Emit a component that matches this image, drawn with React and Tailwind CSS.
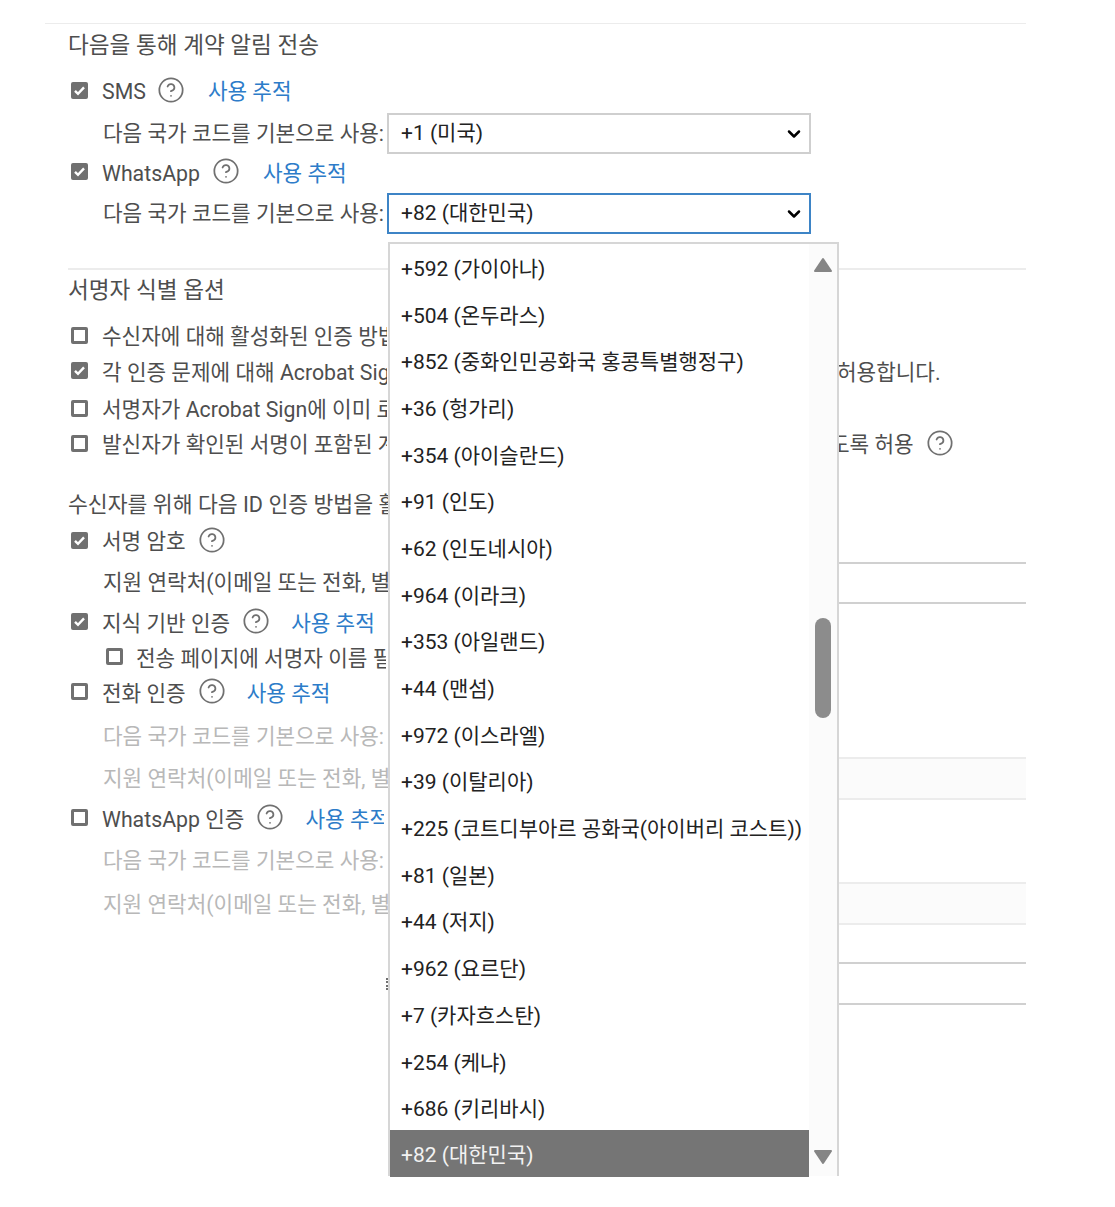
import { ChevronDown, CircleHelp } from "lucide-react"

const codes = [
  "+592 (가이아나)", "+504 (온두라스)", "+852 (중화인민공화국 홍콩특별행정구)", "+36 (헝가리)", "+354 (아이슬란드)",
  "+91 (인도)", "+62 (인도네시아)", "+964 (이라크)", "+353 (아일랜드)", "+44 (맨섬)", "+972 (이스라엘)", "+39 (이탈리아)",
  "+225 (코트디부아르 공화국(아이버리 코스트))", "+81 (일본)", "+44 (저지)", "+962 (요르단)", "+7 (카자흐스탄)",
  "+254 (케냐)", "+686 (키리바시)",
]

function Check({ on }) {
  if (!on) return <span className="block size-[17px] shrink-0 rounded-[2px] border-[3px] border-[#707070] mb-[4px]" />
  return (
    <span className="flex size-[17px] shrink-0 items-center justify-center rounded-[2px] bg-[#707070] mb-[4px]">
      <svg width="13" height="13" viewBox="0 0 13 13" fill="none">
        <path d="M2 6.8l3 3 6-6.4" stroke="#fff" strokeWidth="2.4" />
      </svg>
    </span>
  )
}

function Help({ className = "" }) {
  return <CircleHelp size={28} strokeWidth={1.5} className={`shrink-0 text-[#707070] mb-[5px] ${className}`} />
}

function Track({ className = "" }) {
  return <span className={`whitespace-nowrap text-[#2d7cc9] ${className}`}>사용 추적</span>
}

function Select({ value, focused }) {
  return (
    <div className={`flex h-[41px] w-[424px] shrink-0 items-center justify-between bg-white pl-[12px] pr-[5px] text-[21px] text-[#222] ${focused ? "border-2 border-[#3d84c6]" : "border-2 border-[#cfcfcf]"}`}>
      <span>{value}</span>
      <ChevronDown size={20} strokeWidth={3} className="text-black" />
    </div>
  )
}

// row with a label that runs under the open list
function Clip({ children, width, className = "" }) {
  return <span className={`block overflow-hidden whitespace-nowrap py-[3px] ${className}`} style={{ width }}>{children}</span>
}

function InputRow({ label, h, disabled, tone = "border-[#d0d0d0]", fill = "", labelClass = "" }) {
  return (
    <div className={`flex items-center pl-[35px] ${h}`}>
      <Clip width={285} className={`${disabled ? "text-[#b8b8b8]" : ""} ${labelClass}`}>{label}</Clip>
      <div className={`h-full flex-1 border-y-2 ${tone} ${fill}`} />
    </div>
  )
}

function CountryLabel() {
  return <span className="w-[284px] shrink-0 whitespace-nowrap">다음 국가 코드를 기본으로 사용:</span>
}

function Arrow({ down }) {
  return (
    <svg width="20" height="16" viewBox="0 0 20 16" className="shrink-0">
      <path d={down ? "M2 2h16l-8 12z" : "M10 2l8 12H2z"} fill="#858585" stroke="#858585" strokeWidth="2" strokeLinejoin="round" />
    </svg>
  )
}

export default function App() {
  return (
    <div className="relative h-[1207px] w-[1115px] overflow-hidden bg-white font-['Roboto','Noto_Sans_CJK_KR',sans-serif] text-[21.3px] leading-none text-[#4e4e4e]">
      <div className="ml-[45px] mt-[23px] w-[981px] border-t border-[#ececec] pl-[23px]">
        <div className="flex h-[40px] items-center pt-[4px] text-[22.6px]">다음을 통해 계약 알림 전송</div>

        <div className="mt-[8px] flex h-[40px] items-center pl-[3px]">
          <Check on />
          <span className="ml-[14px]">SMS</span>
          <Help className="ml-[11px]" />
          <Track className="ml-[23px]" />
        </div>
        <div className="mt-px flex h-[41px] items-center pl-[35px]">
          <CountryLabel />
          <Select value="+1 (미국)" />
        </div>
        <div className="flex h-[39px] items-center pl-[3px]">
          <Check on />
          <span className="ml-[14px]">WhatsApp</span>
          <Help className="ml-[12px]" />
          <Track className="ml-[23px]" />
        </div>
        <div className="flex h-[41px] items-center pl-[35px]">
          <CountryLabel />
          <Select value="+82 (대한민국)" focused />
        </div>

        <div className="mt-[34px] border-t-2 border-[#ececec]" />
        <div className="flex h-[41px] items-center pt-[2px] text-[22.6px]">서명자 식별 옵션</div>

        <div className="mt-[8px] flex h-[36px] items-center pl-[3px]">
          <Check />
          <Clip width={285} className="ml-[14px]">수신자에 대해 활성화된 인증 방법</Clip>
        </div>
        <div className="flex h-[35px] items-center pl-[3px]">
          <Check on />
          <Clip width={285} className="ml-[14px]">각 인증 문제에 대해 Acrobat Sign</Clip>
          <span className="ml-[450px] whitespace-nowrap">허용합니다.</span>
        </div>
        <div className="mt-[2px] flex h-[36px] items-center pl-[3px]">
          <Check />
          <Clip width={285} className="ml-[14px]">서명자가 Acrobat Sign에 이미 로</Clip>
        </div>
        <div className="flex h-[34px] items-center pl-[3px]">
          <Check />
          <Clip width={285} className="ml-[14px]">발신자가 확인된 서명이 포함된 계</Clip>
          <span className="ml-[443px] whitespace-nowrap">도록 허용</span>
          <Help className="ml-[12px]" />
        </div>

        <div className="mt-[23px] flex h-[40px] items-center text-[21.6px]">
          <Clip width={320}>수신자를 위해 다음 ID 인증 방법을 활</Clip>
        </div>
        <div className="flex h-[34px] items-center pl-[3px]">
          <Check on />
          <span className="ml-[14px]">서명 암호</span>
          <Help className="ml-[12px]" />
        </div>
        <div className="mt-[3px]">
          <InputRow label="지원 연락처(이메일 또는 전화, 별" h="h-[42px]" />
        </div>
        <div className="mt-[2px] flex h-[35px] items-center pl-[3px]">
          <Check on />
          <span className="ml-[14px]">지식 기반 인증</span>
          <Help className="ml-[12px]" />
          <Track className="ml-[21px]" />
        </div>
        <div className="flex h-[35px] items-center pl-[38px]">
          <Check />
          <Clip width={250} className="ml-[13px]">전송 페이지에 서명자 이름 필</Clip>
        </div>
        <div className="flex h-[35px] items-center pl-[3px]">
          <Check />
          <span className="ml-[14px]">전화 인증</span>
          <Help className="ml-[12px]" />
          <Track className="ml-[21px]" />
        </div>
        <div className="mt-[6px] flex h-[40px] items-center pl-[35px] text-[#b8b8b8]">
          <CountryLabel />
        </div>
        <div>
          <InputRow label="지원 연락처(이메일 또는 전화, 별" h="h-[43px]" disabled tone="border-[#ececec]" fill="bg-[#fbfbfb]" />
        </div>
        <div className="mt-px flex h-[37px] items-center pl-[3px]">
          <Check />
          <span className="ml-[14px]">WhatsApp 인증</span>
          <Help className="ml-[12px]" />
          <Clip width={79} className="ml-[21px] text-[#2d7cc9]">사용 추적</Clip>
        </div>
        <div className="mt-[3px] flex h-[40px] items-center pl-[35px] text-[#b8b8b8]">
          <CountryLabel />
        </div>
        <div className="mt-px">
          <InputRow label="지원 연락처(이메일 또는 전화, 별" h="h-[43px]" disabled tone="border-[#ececec]" fill="bg-[#fbfbfb]" labelClass="mt-[3px]" />
        </div>
        <div className="mt-[37px] flex h-[43px] items-center pl-[318px]">
          <span className="h-[12px] w-[2px] border-l-2 border-dotted border-[#707070]" />
          <div className="h-full flex-1 border-y-2 border-[#d0d0d0]" />
        </div>
      </div>

      {/* open country list */}
      <div className="absolute left-[388px] top-[242px] flex h-[934px] w-[451px] border-x-2 border-t-2 border-[#d6d6d6] bg-white text-[21px]">
        <div className="flex w-[419px] flex-col pt-[2px] text-[#222]">
          {codes.map((c, i) => (
            <div key={i} className="flex h-[46.7px] shrink-0 items-center whitespace-nowrap pl-[11px]">{c}</div>
          ))}
          <div className="-mt-[3px] flex h-[47px] shrink-0 items-center bg-[#757575] pl-[11px] pt-[4px] text-[#f2f2f2]">+82 (대한민국)</div>
        </div>
        <div className="flex flex-1 flex-col items-center justify-between bg-[#fbfbfb] pb-[11px] pt-[13px]">
          <Arrow />
          <span className="mb-[335px] mt-[249px] h-[100px] w-[16px] rounded-full bg-[#8c8c8c]" />
          <Arrow down />
        </div>
      </div>
    </div>
  )
}
